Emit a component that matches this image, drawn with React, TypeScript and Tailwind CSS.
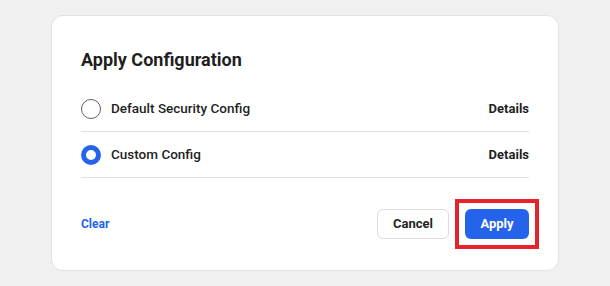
import { useState } from "react";

const options = [
  { id: "default", label: "Default Security Config" },
  { id: "custom", label: "Custom Config" },
];

export default function App() {
  const [selected, setSelected] = useState("custom");

  return (
    <div className="min-h-[286px] bg-[#f0f0f0] px-[51px] pt-[15px] pb-[16px] font-['Roboto',sans-serif] text-[#1f1f1f]">
      <div className="rounded-[12px] border border-[#e2e2e2] bg-white px-[29px] pt-[32px] pb-[31px]">
        <h2 className="text-[18px] leading-[24px] font-bold">Apply Configuration</h2>
        <div className="mt-[14px]">
          {options.map((opt) => (
            <div
              key={opt.id}
              className="flex h-[46px] items-center justify-between border-b border-[#e0e0e0]"
            >
              <label className="flex cursor-pointer items-center gap-[10px]">
                <input
                  type="radio"
                  name="config"
                  className="sr-only"
                  checked={selected === opt.id}
                  onChange={() => setSelected(opt.id)}
                />
                <span
                  className={
                    selected === opt.id
                      ? "h-[20px] w-[20px] rounded-full border-[5px] border-[#2563eb] bg-white"
                      : "h-[20px] w-[20px] rounded-full border border-[#5f5f5f] bg-white"
                  }
                />
                <span className="text-[13.5px] font-medium">{opt.label}</span>
              </label>
              <button className="text-[13px] font-bold">Details</button>
            </div>
          ))}
        </div>
        <div className="mt-[31px] flex items-center justify-between">
          <button className="text-[12px] font-bold text-[#2563eb]">Clear</button>
          <div className="flex items-center gap-[16px]">
            <button className="h-[30px] w-[72px] rounded-[6px] border border-[#dcdcdc] bg-white text-[13px] font-bold">
              Cancel
            </button>
            {/* highlight frame sits outside the button's box */}
            <div className="-m-[10px] border-4 border-[#e3242b] p-[6px]">
              <button className="block h-[30px] w-[64px] rounded-[6px] bg-[#2563eb] text-[13px] font-bold text-white">
                Apply
              </button>
            </div>
          </div>
        </div>
      </div>
    </div>
  );
}
